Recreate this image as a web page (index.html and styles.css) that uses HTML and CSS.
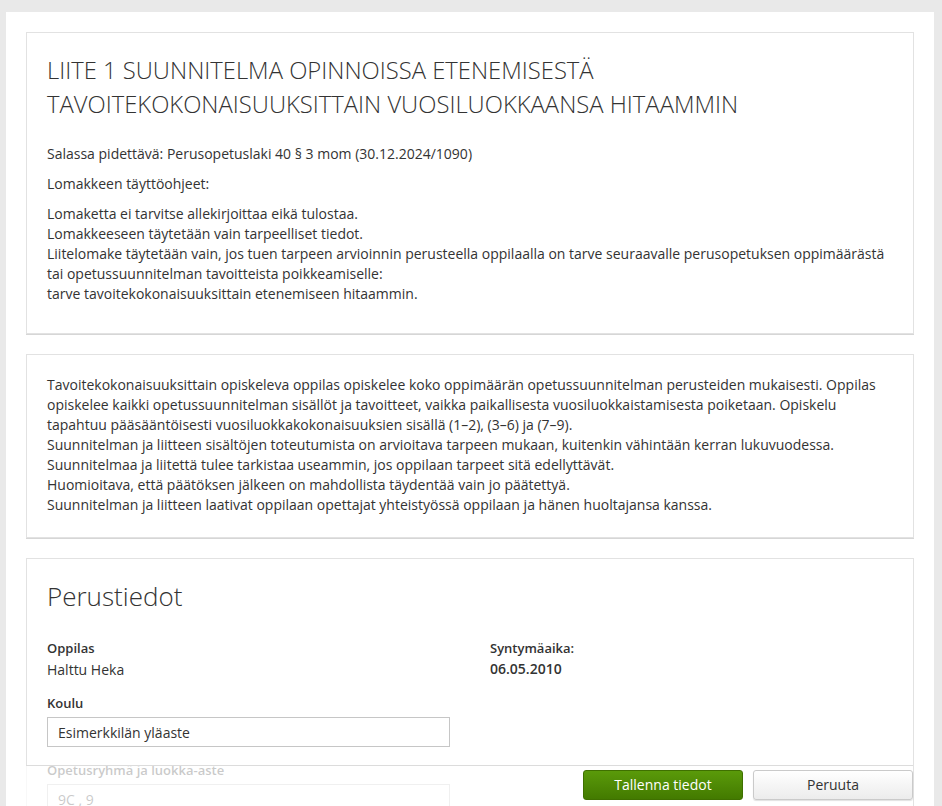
FILE: index.html
```html
<!DOCTYPE html>
<html lang="fi">
<head>
<meta charset="utf-8">
<title>Liite 1</title>
<link rel="stylesheet" href="styles.css">
</head>
<body>
<div class="page">
  <section class="card card-intro">
    <h1 class="doc-title">LIITE 1 SUUNNITELMA OPINNOISSA ETENEMISESTÄ TAVOITEKOKONAISUUKSITTAIN VUOSILUOKKAANSA HITAAMMIN</h1>
    <p>Salassa pidettävä: Perusopetuslaki 40 § 3 mom (30.12.2024/1090)</p>
    <p>Lomakkeen täyttöohjeet:</p>
    <p>Lomaketta ei tarvitse allekirjoittaa eikä tulostaa.<br>
    Lomakkeeseen täytetään vain tarpeelliset tiedot.<br>
    Liitelomake täytetään vain, jos tuen tarpeen arvioinnin perusteella oppilaalla on tarve seuraavalle perusopetuksen oppimäärästä tai opetussuunnitelman tavoitteista poikkeamiselle:<br>
    tarve tavoitekokonaisuuksittain etenemiseen hitaammin.</p>
  </section>

  <section class="card card-info">
    <p class="last">Tavoitekokonaisuuksittain opiskeleva oppilas opiskelee koko oppimäärän opetussuunnitelman perusteiden mukaisesti. Oppilas opiskelee kaikki opetussuunnitelman sisällöt ja tavoitteet, vaikka paikallisesta vuosiluokkaistamisesta poiketaan. Opiskelu tapahtuu pääsääntöisesti vuosiluokkakokonaisuuksien sisällä (1–2), (3–6) ja (7–9).<br>
    Suunnitelman ja liitteen sisältöjen toteutumista on arvioitava tarpeen mukaan, kuitenkin vähintään kerran lukuvuodessa.<br>
    Suunnitelmaa ja liitettä tulee tarkistaa useammin, jos oppilaan tarpeet sitä edellyttävät.<br>
    Huomioitava, että päätöksen jälkeen on mahdollista täydentää vain jo päätettyä.<br>
    Suunnitelman ja liitteen laativat oppilaan opettajat yhteistyössä oppilaan ja hänen huoltajansa kanssa.</p>
  </section>

  <section class="card card-form">
    <h2 class="section-title">Perustiedot</h2>
    <div class="form-grid">
      <div class="col">
        <div class="field">
          <div class="label">Oppilas</div>
          <div class="value">Halttu Heka</div>
        </div>
        <div class="field">
          <label class="label" for="koulu">Koulu</label>
          <input class="input" id="koulu" type="text" value="Esimerkkilän yläaste">
        </div>
        <div class="field">
          <label class="label" for="ryhma">Opetusryhmä ja luokka-aste</label>
          <input class="input" id="ryhma" type="text" value="9C , 9">
        </div>
      </div>
      <div class="col">
        <div class="field">
          <div class="label">Syntymäaika:</div>
          <div class="value strong">06.05.2010</div>
        </div>
      </div>
    </div>
  </section>

  <div class="footer-bar">
    <button class="btn btn-primary" type="button">Tallenna tiedot</button>
    <button class="btn btn-default" type="button">Peruuta</button>
  </div>
</div>
</body>
</html>
```

FILE: styles.css
```css
html {
  overflow: hidden;
}
body {
  margin: 12px 8px 0 6px;
  background: #e9e9e9;
  font-family: "Open Sans", "Noto Sans", sans-serif;
  font-size: 14px;
  line-height: 20px;
  color: #333;
}
.page {
  position: relative;
  box-sizing: border-box;
  height: 794px;
  overflow: hidden;
  background: #fff;
  padding: 20px 20px 0 20px;
}
.card {
  background: #fff;
  border: 1px solid #e2e2e2;
  box-shadow: 0 1px 0 #d6d6d6;
  padding: 20px;
  margin-bottom: 20px;
}
.card p {
  margin: 0 0 10px 0;
}
.card-intro p:last-child {
  margin-bottom: 9px;
}
.card p.last {
  margin: 0;
}
.card-info {
  padding-bottom: 22px;
}
.doc-title {
  font-weight: 300;
  font-size: 23.8px;
  line-height: 34px;
  margin: 0 0 23px 0;
  color: #333;
}
.section-title {
  font-weight: 300;
  font-size: 26px;
  line-height: 35px;
  margin: 0 0 25px 0;
  color: #333;
}
.card-form {
  padding-bottom: 200px;
  margin-bottom: 0;
}
.form-grid {
  display: grid;
  grid-template-columns: 403px 403px;
  column-gap: 40px;
}
.field {
  display: flex;
  flex-direction: column;
  margin-bottom: 14px;
}
.label {
  font-size: 13px;
  font-weight: 600;
  line-height: 18px;
  color: #333;
}
.value {
  margin-top: 3px;
}
.col:last-child .value {
  margin-top: 2px;
}
.value.strong {
  font-weight: 600;
}
.field .label + .input {
  margin-top: 5px;
}
.input {
  box-sizing: border-box;
  width: 403px;
  height: 30px;
  border: 1px solid #c6c6c6;
  border-radius: 0;
  padding: 0 10px;
  font-family: "Open Sans", "Noto Sans", sans-serif;
  font-size: 14px;
  color: #333;
  background: #fff;
}
.footer-bar {
  position: absolute;
  left: 20px;
  right: 21px;
  bottom: 0;
  display: flex;
  justify-content: flex-end;
  gap: 10px;
  padding: 4px 0 6px 0;
  border-top: 1px solid #dcdcdc;
  background: rgba(255, 255, 255, 0.74);
}
.btn {
  box-sizing: border-box;
  width: 160px;
  height: 30px;
  border-radius: 3px;
  font-family: "Open Sans", "Noto Sans", sans-serif;
  font-size: 14px;
  line-height: 20px;
  padding: 0;
  cursor: pointer;
}
.btn-primary {
  color: #fff;
  border: 1px solid #3f7000;
  background: linear-gradient(#5a9a0a, #437a00);
}
.btn-default {
  color: #333;
  border: 1px solid #cacaca;
  background: linear-gradient(#ffffff, #ececec);
  box-shadow: 0 1px 1px rgba(0, 0, 0, 0.12);
}
```
